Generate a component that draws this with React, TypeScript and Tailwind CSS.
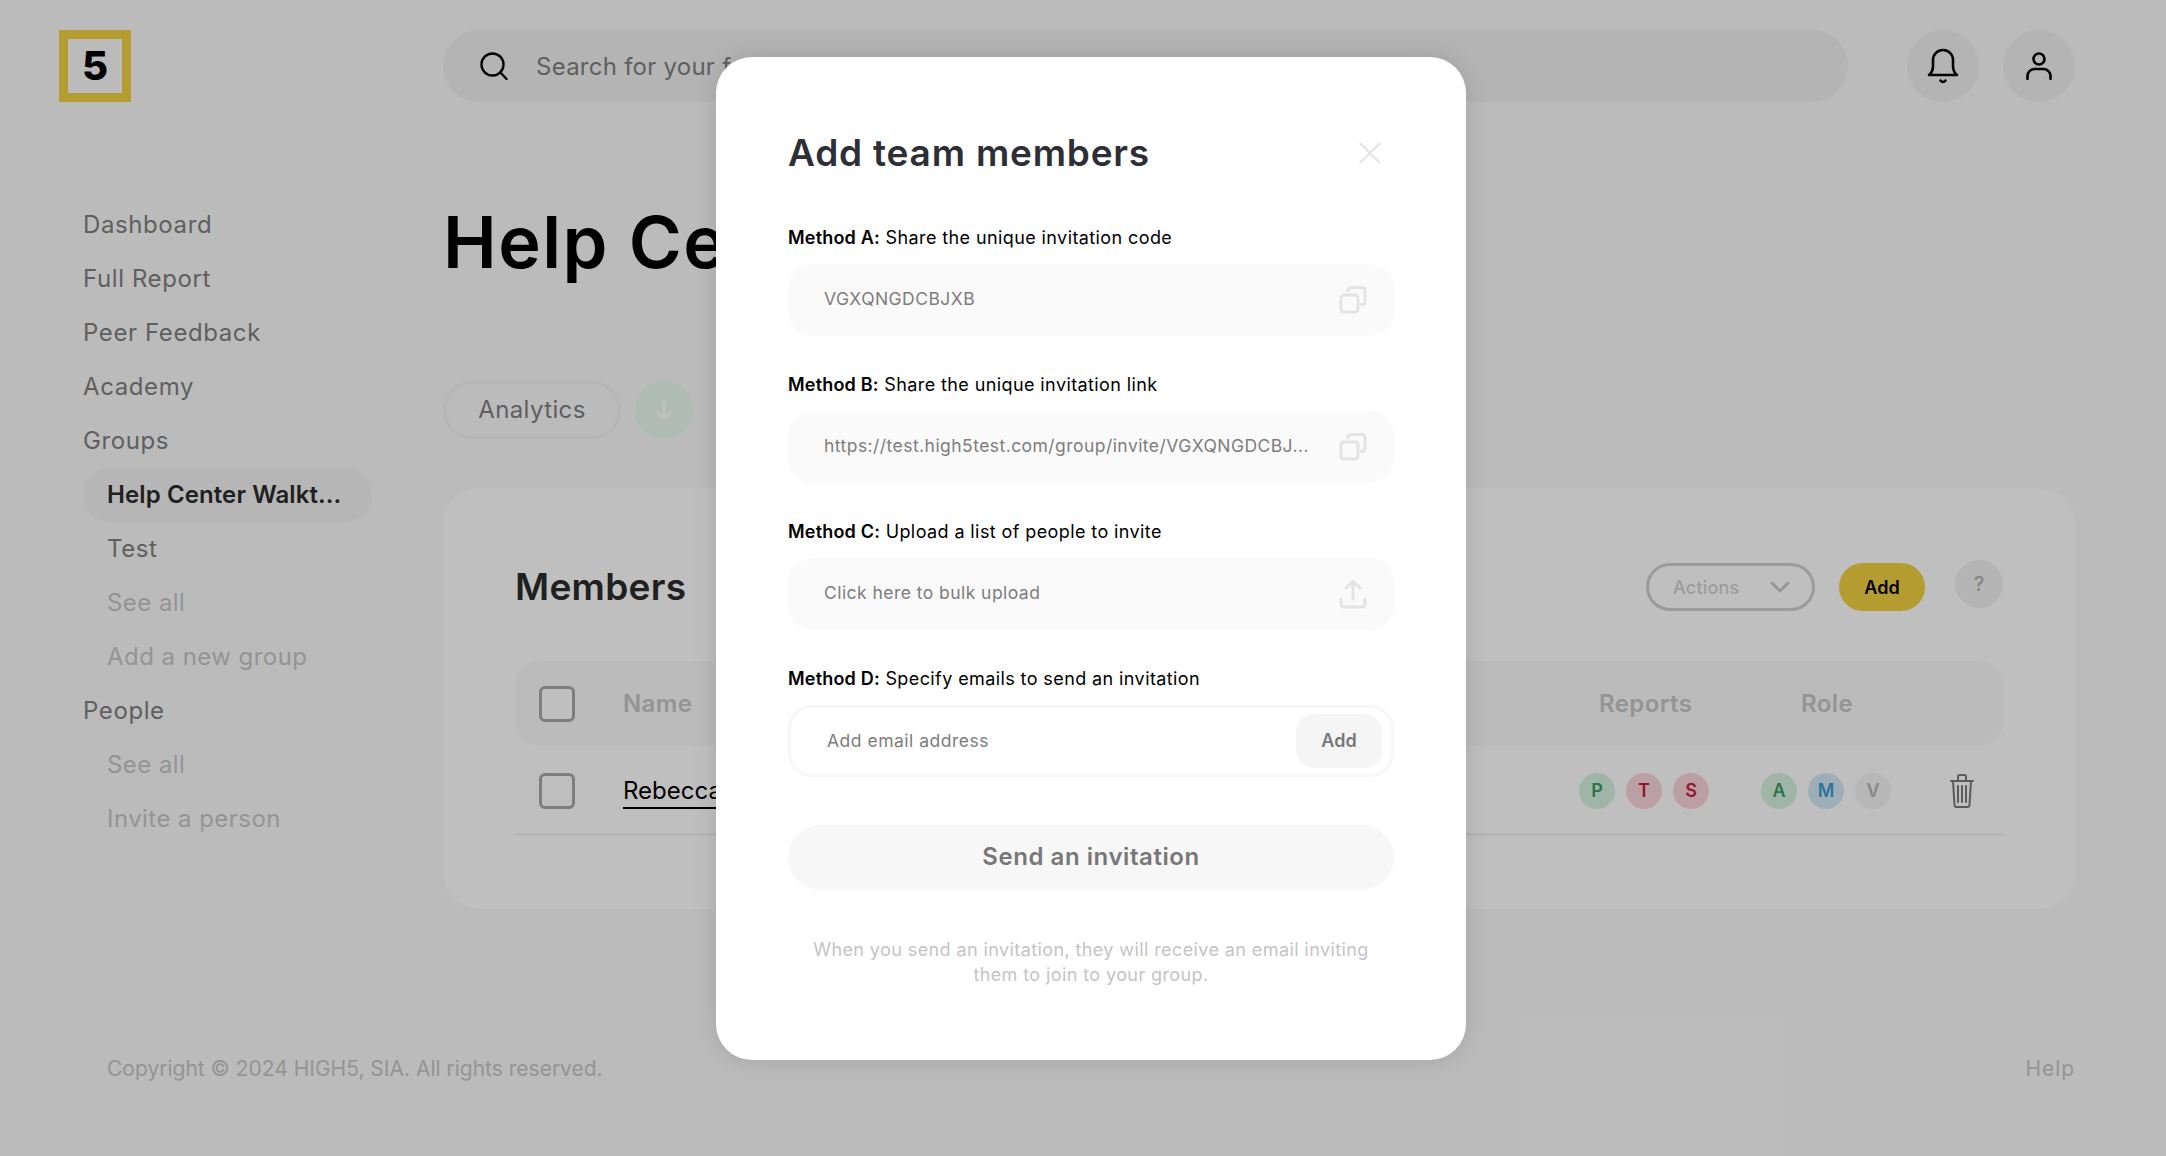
import React from "react";

const Copy = () => (
  <svg width="28" height="28" viewBox="0 0 28 28" fill="none" stroke="#e3e3e3" strokeWidth="3" strokeLinecap="round" strokeLinejoin="round">
    <rect x="2" y="9" width="17" height="17" rx="3" />
    <path d="M9 5V4.500a3 3 0 0 1 3-3h11a3 3 0 0 1 3 3v11a3 3 0 0 1-3 3h-.5" />
  </svg>
);

const Upload = () => (
  <svg width="28" height="30" viewBox="0 0 28 30" fill="none" stroke="#e3e3e3" strokeWidth="3" strokeLinecap="round" strokeLinejoin="round">
    <path d="M14 20V3M7 9l7-7 7 7" />
    <path d="M2 20v5a3 3 0 0 0 3 3h18a3 3 0 0 0 3-3v-5" />
  </svg>
);

const Badge = ({ c, cls }: { c: string; cls: string }) => (
  <div className={`flex h-9 w-9 items-center justify-center rounded-full text-[18px] font-semibold ${cls}`}>{c}</div>
);

const Check = () => <div className="h-9 w-9 rounded-[6px] border-[3px] border-[#a8a8a8] bg-white" />;

const Method = ({ l, t }: { l: string; t: string }) => (
  <div className="mb-[13px] h-[26px] text-[18px] leading-[26px] tracking-[0.4px] text-black">
    <span className="font-semibold tracking-[0.2px]">{l}</span> {t}
  </div>
);

const Field = ({ t, icon }: { t: string; icon: React.ReactNode }) => (
  <div className="flex h-[72px] items-center justify-between rounded-[24px] bg-[#fafafa] pl-9 pr-[27px] text-[17.500px] tracking-[0.45px] text-[#7d7d7d]">
    <span className="-mt-0.5">{t}</span>
    {icon}
  </div>
);

const NavItem = ({ t, tone = "main" }: { t: string; tone?: "main" | "sub" | "muted" | "active" }) => {
  const cls = {
    main: "text-[#7f7f7f] tracking-[0.6px]",
    sub: "pl-6 text-[#7f7f7f] tracking-[0.6px]",
    muted: "pl-6 text-[#c6c6c6] tracking-[0.45px]",
    active: "w-[289px] rounded-full bg-[#f3f3f3] pl-6 font-semibold text-[#2b2b2b] tracking-[0.1px]",
  }[tone];
  return <div className={`flex h-[54px] items-center text-[24px] ${cls}`}>{t}</div>;
};

export default function App() {
  return (
    <div className="relative h-[1156px] w-full overflow-hidden bg-[#fafafa] font-['Inter',sans-serif]">
      <header className="flex items-start px-[59px] pt-[30px]">
        <div className="flex h-[72px] w-[72px] items-center justify-center border-[9px] border-[#f2d040] bg-[#fafafa] text-[40px] font-extrabold leading-none text-black">
          5
        </div>
        <div className="ml-[312px] flex h-[72px] w-[1405px] items-center rounded-full bg-[#f0f0f0] pl-[37px]">
          <svg width="28" height="28" viewBox="0 0 28 28" fill="none" stroke="#000" strokeWidth="2.400" strokeLinecap="round">
            <circle cx="12.500" cy="12.500" r="11" />
            <path d="M20.500 20.500l6 6.500" />
          </svg>
          <span className="ml-[28px] mt-[2px] text-[24px] tracking-[0.25px] text-[#7f7f7f]">Search for your focus areas</span>
        </div>
        <div className="ml-[59px] flex h-[72px] w-[72px] items-center justify-center rounded-full bg-[#f0f0f0]">
          <svg width="32" height="36" viewBox="0 0 32 36" fill="none" stroke="#000" strokeWidth="2.600" strokeLinecap="round" strokeLinejoin="round">
            <path d="M2 27c3-2.500 4-5.500 4-9v-6a10 10 0 0 1 20 0v6c0 3.500 1 6.500 4 9z" />
            <path d="M13.500 32.500c1.500 2 3.500 2 5 0" />
          </svg>
        </div>
        <div className="ml-6 flex h-[72px] w-[72px] items-center justify-center rounded-full bg-[#f0f0f0]">
          <svg width="26" height="28" viewBox="0 0 26 28" fill="none" stroke="#000" strokeWidth="2.600" strokeLinecap="round">
            <circle cx="13" cy="7" r="5.500" />
            <path d="M1.500 27v-3a7 7 0 0 1 7-7h9a7 7 0 0 1 7 7v3" />
          </svg>
        </div>
      </header>

      <div className="mt-[96px] flex pl-[83px] pr-[91px]">
        <nav className="w-[360px] shrink-0">
          <NavItem t="Dashboard" />
          <NavItem t="Full Report" />
          <NavItem t="Peer Feedback" />
          <NavItem t="Academy" />
          <NavItem t="Groups" />
          <NavItem t="Help Center Walkt..." tone="active" />
          <NavItem t="Test" tone="sub" />
          <NavItem t="See all" tone="muted" />
          <NavItem t="Add a new group" tone="muted" />
          <NavItem t="People" />
          <NavItem t="See all" tone="muted" />
          <NavItem t="Invite a person" tone="muted" />
        </nav>

        <main className="min-w-0 flex-1">
          <h1 className="h-[90px] text-[72px] font-semibold leading-[88px] tracking-[1.500px] text-black">Help Center Walkthrough</h1>
          <div className="mt-[93px] flex items-center gap-[14px]">
            <div className="flex h-[58px] w-[178px] items-center justify-center rounded-full border-[3px] border-[#f3f3f3] text-[24px] tracking-[0.4px] text-[#7f7f7f]">
              Analytics
            </div>
            <div className="flex h-[58px] w-[58px] items-center justify-center rounded-full bg-[#e8fbef]">
              <svg width="20" height="22" viewBox="0 0 20 22" fill="none" stroke="#fff" strokeWidth="2.500" strokeLinecap="round" strokeLinejoin="round">
                <path d="M10 2v18M3 13l7 7 7-7" />
              </svg>
            </div>
          </div>

          <section className="mt-[49px] h-[421px] rounded-[36px] bg-white px-[72px] pt-[72px]">
            <div className="flex h-[54px] items-center">
              <h2 className="flex-1 text-[37px] font-semibold tracking-[0.3px] text-[#2b2b2b]">Members</h2>
              <div className="flex h-12 w-[169px] items-center justify-between rounded-full border-[3px] border-[#cfcfcf] pl-6 pr-[22px] text-[18px] font-medium tracking-[0.2px] text-[#d0d0d0]">
                Actions
                <svg width="20" height="12" viewBox="0 0 20 12" fill="none" stroke="#c8c8c8" strokeWidth="2.800" strokeLinecap="round" strokeLinejoin="round">
                  <path d="M2 2l8 8 8-8" />
                </svg>
              </div>
              <div className="ml-6 flex h-12 w-[86px] items-center justify-center rounded-full bg-[#f2d040] text-[18px] font-semibold text-black">Add</div>
              <div className="mb-[6px] ml-[30px] flex h-12 w-12 items-center justify-center rounded-full bg-[#f0f0f0] text-[20px] font-medium text-[#b0b0b0]">?</div>
            </div>

            <div className="mt-[47px] grid h-[85px] grid-cols-[108px_956px_182px_1fr] items-center rounded-[24px] bg-[#fafafa] text-[24px] font-semibold tracking-[0.4px] text-[#c6c6c6]">
              <div className="pl-6"><Check /></div>
              <div>Name</div>
              <div className="pl-[20px]">Reports</div>
              <div className="pl-[40px]">Role</div>
            </div>

            <div className="grid h-[90px] grid-cols-[108px_956px_182px_189px_1fr] items-center border-b-[3px] border-[#f3f3f3] pt-[2px]">
              <div className="pl-6"><Check /></div>
              <div>
                <span className="border-b-2 border-black pb-0.5 text-[24px] leading-[30px] text-black">Rebecca Walker</span>
              </div>
              <div className="flex gap-[11px]">
                <Badge c="P" cls="bg-[#d6f0df] text-[#3a9a63]" />
                <Badge c="T" cls="bg-[#f9d5dc] text-[#c4203f]" />
                <Badge c="S" cls="bg-[#f9d5dc] text-[#c4203f]" />
              </div>
              <div className="flex gap-[11px]">
                <Badge c="A" cls="bg-[#d6f0df] text-[#3a9a63]" />
                <Badge c="M" cls="bg-[#d3e9f5] text-[#3d9bd0]" />
                <Badge c="V" cls="bg-[#f4f4f4] text-[#b5b5b5]" />
              </div>
              <div>
                <svg width="24" height="34" viewBox="0 0 24 34" fill="none" stroke="#7a7a7a" strokeWidth="2" strokeLinecap="round" strokeLinejoin="round">
                  <path d="M1 7h22M8 7V2.500A1.500 1.500 0 0 1 9.500 1h5A1.500 1.500 0 0 1 16 2.500V7" />
                  <path d="M3 7l1.500 24a2 2 0 0 0 2 2h11a2 2 0 0 0 2-2L21 7" />
                  <path d="M8 12v16M12 12v16M16 12v16" />
                </svg>
              </div>
            </div>
          </section>
        </main>
      </div>

      <footer className="mt-[145px] flex h-[30px] items-center justify-between pl-[107px] pr-[91px] text-[21px] text-[#c6c6c6]">
        <span>Copyright © 2024 HIGH5, SIA. All rights reserved.</span>
        <span className="tracking-[0.9px]">Help</span>
      </footer>

      <div className="absolute inset-0 flex items-start justify-center bg-black/25 pl-4 pt-[57px]">
        <div className="w-[750px] rounded-[36px] bg-white px-[72px] pb-[73px] pt-[72px] shadow-[0_0_24px_rgba(0,0,0,0.12)]">
          <div className="flex h-12 items-center justify-between">
            <h2 className="text-[37px] font-semibold tracking-[0.8px] text-[#2e2f36]">Add team members</h2>
            <svg className="mr-[13px]" width="22" height="22" viewBox="0 0 22 22" fill="none" stroke="#e6e6e6" strokeWidth="2.400" strokeLinecap="round">
              <path d="M1.500 1.500l19 19M20.500 1.500l-19 19" />
            </svg>
          </div>

          <div className="mt-[48px]">
            <Method l="Method A:" t="Share the unique invitation code" />
            <Field t="VGXQNGDCBJXB" icon={<Copy />} />
          </div>
          <div className="mt-9">
            <Method l="Method B:" t="Share the unique invitation link" />
            <Field t="https://test.high5test.com/group/invite/VGXQNGDCBJ..." icon={<Copy />} />
          </div>
          <div className="mt-9">
            <Method l="Method C:" t="Upload a list of people to invite" />
            <Field t="Click here to bulk upload" icon={<Upload />} />
          </div>
          <div className="mt-9">
            <Method l="Method D:" t="Specify emails to send an invitation" />
            <div className="flex h-[72px] items-center justify-between rounded-[24px] border-[3px] border-[#f7f7f7] pl-9 pr-[9px]">
              <span className="text-[17.500px] tracking-[0.5px] text-[#7d7d7d]">Add email address</span>
              <div className="flex h-[54px] w-[86px] items-center justify-center rounded-[18px] bg-[#f5f5f5] pb-[2px] text-[18px] font-semibold text-[#777]">Add</div>
            </div>
          </div>

          <div className="mt-12 flex h-[65px] items-center justify-center rounded-full bg-[#f7f7f7] pb-[2px] text-[24px] font-semibold tracking-[0.55px] text-[#777]">
            Send an invitation
          </div>
          <p className="mt-[47px] text-center text-[18px] leading-[25px] tracking-[0.4px] text-[#c4c4c4]">
            When you send an invitation, they will receive an email inviting
            <br />
            them to join to your group.
          </p>
        </div>
      </div>
    </div>
  );
}
